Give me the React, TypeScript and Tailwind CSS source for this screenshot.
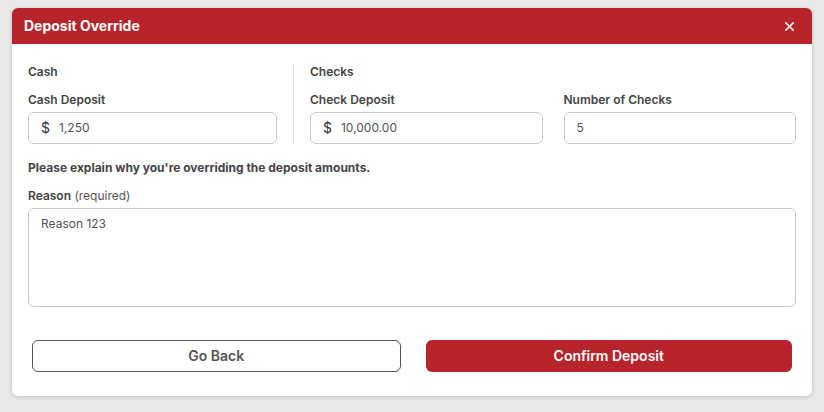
import { X } from 'lucide-react';

function MoneyInput({ value }: { value: string }) {
  return (
    <div className="flex h-8 items-center rounded-md border border-[#c9c9c9] bg-white pl-3">
      <span className="text-sm text-[#333]">$</span>
      <span className="ml-[9px] text-xs text-[#555]">{value}</span>
    </div>
  );
}

function Label({ children }: { children: React.ReactNode }) {
  return <div className="mb-1 text-xs font-semibold leading-4 text-[#444]">{children}</div>;
}

export default function App() {
  return (
    <div
      className="min-h-[412px] w-[824px] bg-[#e9e9e9] pt-2"
      style={{ fontFamily: 'Inter, "Noto Sans", sans-serif' }}
    >
      <div className="mx-3 w-[800px] overflow-hidden rounded-md bg-white shadow-[0_1px_4px_rgba(0,0,0,0.18)]">
        <div className="flex h-9 items-center justify-between bg-[#b7242b] pl-3 pr-[15px]">
          <h2 className="text-sm font-bold text-white">Deposit Override</h2>
          <X size={15} strokeWidth={2.5} className="text-white" />
        </div>

        <div className="px-4 pt-5">
          <div className="flex">
            <div className="w-[249px]">
              <div className="text-xs font-semibold leading-4 text-[#444]">Cash</div>
              <div className="mt-3">
                <Label>Cash Deposit</Label>
                <MoneyInput value="1,250" />
              </div>
            </div>
            <div className="mx-4 w-px bg-[#e2e2e2]" />
            <div className="flex-1">
              <div className="text-xs font-semibold leading-4 text-[#444]">Checks</div>
              <div className="mt-3 grid grid-cols-2 gap-[21px]">
                <div>
                  <Label>Check Deposit</Label>
                  <MoneyInput value="10,000.00" />
                </div>
                <div>
                  <Label>Number of Checks</Label>
                  <div className="flex h-8 items-center rounded-md border border-[#c9c9c9] bg-white pl-3 text-xs text-[#555]">
                    5
                  </div>
                </div>
              </div>
            </div>
          </div>

          <p className="mt-4 text-xs font-bold leading-4 text-[#444]">
            Please explain why you're overriding the deposit amounts.
          </p>

          <div className="mt-3">
            <div className="mb-1 text-xs leading-4 text-[#555]">
              <span className="font-semibold text-[#444]">Reason</span> (required)
            </div>
            <div className="h-[99px] rounded-md border border-[#c9c9c9] bg-white px-3 pt-[7px] text-xs text-[#555]">
              Reason 123
            </div>
          </div>

          <div className="flex gap-[25px] px-1 pb-6 pt-[33px]">
            <button
              type="button"
              className="h-8 flex-1 rounded-md border border-[#555] bg-white text-sm font-semibold text-[#555]"
            >
              Go Back
            </button>
            <button
              type="button"
              className="h-8 flex-1 rounded-md bg-[#b7242b] text-sm font-semibold text-white"
            >
              Confirm Deposit
            </button>
          </div>
        </div>
      </div>
    </div>
  );
}
